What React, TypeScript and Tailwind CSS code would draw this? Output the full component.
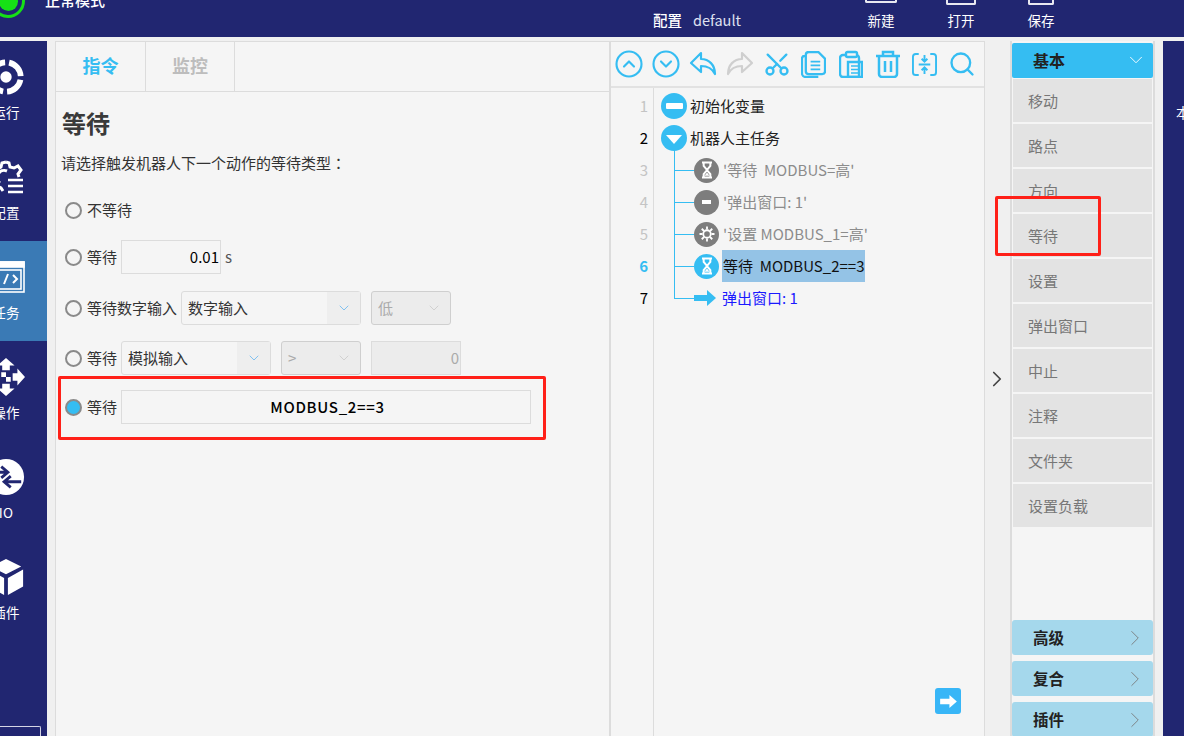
import { ChevronDown, ChevronRight, CircleChevronDown, CircleChevronUp, Scissors, Search } from 'lucide-react'
import type { ReactNode } from 'react'

const navItems = ['运行', '配置', '任务', '操作', 'IO', '插件']
const basicItems = ['移动', '路点', '方向', '等待', '设置', '弹出窗口', '中止', '注释', '文件夹', '设置负载']

function Hourglass() {
  return (
    <svg viewBox="0 0 24 24" className="w-[20px] h-[20px]" fill="none" stroke="#fff" strokeWidth="2.4">
      <path d="M6 3h12M6 21h12M8 3v4l4 5-4 5v4M16 3v4l-4 5 4 5v4" />
      <path d="M9 19l3-4 3 4z" fill="#fff" stroke="none" />
    </svg>
  )
}

function Gear() {
  return (
    <svg viewBox="0 0 24 24" className="w-[18px] h-[18px]" fill="none" stroke="#fff" strokeWidth="2.4">
      <circle cx="12" cy="12" r="5" />
      <path d="M12 2v4M12 18v4M2 12h4M18 12h4M5 5l3 3M16 16l3 3M19 5l-3 3M8 16l-3 3" />
    </svg>
  )
}

function NavIcon({ name }: { name: string }) {
  if (name === '运行') {
    return (
      <svg viewBox="0 0 40 40" className="w-[38px] h-[38px]" fill="none" stroke="#fff">
        <circle cx="20" cy="20" r="15.5" strokeWidth="6" strokeDasharray="20 4.3" strokeDashoffset="-3" />
        <circle cx="20" cy="20" r="6" fill="#fff" stroke="none" />
      </svg>
    )
  }
  if (name === '配置') {
    return (
      <svg viewBox="0 0 40 40" className="w-[40px] h-[40px]" fill="none" stroke="#fff" strokeWidth="3">
        <path d="M20 5l3 1 1 4 4 1 4-2 3 4-3 4 1 3M20 5l-4 1-1 4-4 2-4-2-3 5 3 3v5l-3 3 3 5 4-2 4 2 2 3M14 26a7 7 0 0 1 7-12" />
        <path d="M22 23h15M22 29h15M22 35h15" strokeWidth="2.6" />
      </svg>
    )
  }
  if (name === '任务') {
    return (
      <svg viewBox="0 0 40 34" className="w-[40px] h-[34px]" fill="none" stroke="#fff" strokeWidth="1.6">
        <rect x="1" y="2" width="37" height="30" />
        <rect x="1" y="2" width="37" height="5" fill="#fff" />
        <rect x="5" y="10" width="30" height="19" />
        <path d="M13 15l-4 4 4 4M27 15l4 4-4 4M22 14l-4 10" strokeWidth="2" />
      </svg>
    )
  }
  if (name === '操作') {
    return (
      <svg viewBox="0 0 40 40" className="w-[38px] h-[38px]" fill="#fff">
        <path d="M20 0l9 8h-5v5h-8V8h-5zM20 40l-9-8h5v-5h8v5h5zM40 20l-8 9v-5h-5v-8h5v-5zM0 20l8-9v5h5v8H8v5z" />
        <rect x="15" y="15" width="5" height="5" />
        <rect x="20" y="20" width="5" height="5" />
      </svg>
    )
  }
  if (name === 'IO') {
    return (
      <svg viewBox="0 0 40 40" className="w-[38px] h-[38px]">
        <circle cx="20" cy="20" r="19" fill="#fff" />
        <path d="M4 15h16M15 9l7 6-7 6M36 25H20M25 19l-7 6 7 6" fill="none" stroke="#212671" strokeWidth="3" />
      </svg>
    )
  }
  return (
    <svg viewBox="0 0 40 40" className="w-[38px] h-[38px]" fill="#fff">
      <path d="M20 1l16 8-16 8L4 9zM2 12l16 9v18L2 30zM38 12l-16 9v18l16-9z" />
    </svg>
  )
}

function Radio({ checked }: { checked?: boolean }) {
  return <span className={`w-[17px] h-[17px] rounded-full border-2 border-[#8a8a8a] shrink-0 ${checked ? 'bg-[#35bdf2]' : 'bg-[#f5f5f5]'}`} />
}

function Select({ label, width, disabled }: { label: string; width: string; disabled?: boolean }) {
  return (
    <div className={`${width} h-[34px] flex items-center rounded-[3px] border shrink-0 ${disabled ? 'border-[#cfcfcf] bg-[#ececec] text-[#aaa]' : 'border-[#dcdcdc] bg-[#f5f5f5] text-[#333]'}`}>
      <span className="flex-1 pl-[6px] text-[15px]">{label}</span>
      <span className={`w-[33px] h-full flex items-center justify-center ${disabled ? '' : 'bg-[#eeeeee]'}`}>
        <ChevronDown className={`w-[16px] h-[16px] ${disabled ? 'text-[#ccc]' : 'text-[#6fb9f0]'}`} strokeWidth={1.3} />
      </span>
    </div>
  )
}

function TreeRow({ no, noClass, children }: { no: number; noClass: string; children: ReactNode }) {
  return (
    <div className="h-[32px] flex items-center">
      <span className={`w-[37px] text-right text-[15px] shrink-0 ${noClass}`}>{no}</span>
      {children}
    </div>
  )
}

function ChildRow({ no, noClass, icon, iconBg, children }: { no: number; noClass: string; icon: ReactNode; iconBg: string; children: ReactNode }) {
  return (
    <TreeRow no={no} noClass={noClass}>
      <span className="w-[20px] h-px bg-[#35bdf2] ml-[26px] shrink-0" />
      <span className={`w-[25px] h-[25px] rounded-full flex items-center justify-center shrink-0 ${iconBg}`}>{icon}</span>
      {children}
    </TreeRow>
  )
}

export default function App() {
  return (
    <div className="w-[1184px] h-[736px] overflow-hidden flex flex-col bg-[#f0f0f0] font-['Noto_Sans_CJK_SC','Noto_Sans',sans-serif] relative">
      {/* top bar */}
      <div className="h-[37px] bg-[#212671] text-white flex shrink-0 overflow-hidden">
        <div className="w-[34px] h-[34px] -mt-[16px] -ml-[9px] rounded-full border-[3px] border-[#16e016] flex items-center justify-center shrink-0">
          <span className="w-[19px] h-[19px] rounded-full bg-[#16e016]" />
        </div>
        <span className="ml-[20px] -mt-[11px] text-[15px] font-medium leading-[22px] w-[608px] shrink-0">正常模式</span>
        <div className="flex items-center gap-[11px] text-[14.5px] pt-[3px] w-[174px] shrink-0">
          <span className="font-medium">配置</span>
          <span className="text-[#dfe0f0]">default</span>
        </div>
        <div className="flex text-[13.5px] ml-[14px]">
          {['新建', '打开', '保存'].map((t, i) => (
            <div key={t} className="w-[80px] flex flex-col items-center">
              <span className={`border-x-2 border-b-2 border-[#e8e8f0] rounded-b-[2px] ${i === 0 ? 'w-[32px] h-[3px]' : i === 1 ? 'w-[30px] h-[5px]' : 'w-[26px] h-[5px]'}`} />
              <span className={`leading-[20px] ${i === 0 ? 'mt-[7px]' : 'mt-[5px]'}`}>{t}</span>
            </div>
          ))}
        </div>
      </div>

      <div className="flex-1 flex mt-[4px] min-h-0">
        {/* left nav, cut off at the window edge */}
        <div className="w-[47px] bg-[#212671] shrink-0 overflow-hidden flex flex-col relative">
          {navItems.map(n => (
            <div key={n} className={`h-[100px] w-[80px] -ml-[34px] flex flex-col items-center text-white shrink-0 ${n === '任务' ? 'bg-[#3a7ab5] w-[114px]! pr-[34px]' : ''}`}>
              <div className="h-[72px] flex items-center justify-center"><NavIcon name={n} /></div>
              <span className="text-[13.5px] leading-[18px] -mt-[10px] tracking-wide">{n}</span>
            </div>
          ))}
          <span className="absolute left-[-8px] bottom-0 w-[49px] h-[10px] border-t border-r border-[#d5d5e5] rounded-tr-[2px]" />
        </div>

        {/* instruction panel */}
        <div className="w-[555px] ml-[8px] bg-[#f5f5f5] border-x border-t border-[#dcdcdc] shrink-0 flex flex-col">
          <div className="h-[50px] flex border-b border-[#dcdcdc] shrink-0 text-[18px] font-bold">
            <div className="w-[90px] pb-[2px] border-r border-[#dcdcdc] flex items-center justify-center text-[#35bdf2]">指令</div>
            <div className="w-[89px] pb-[2px] border-r border-[#dcdcdc] flex items-center justify-center text-[#bdbdbd]">监控</div>
          </div>
          <div className="pl-[6px] text-[#333]">
            <h1 className="text-[24px] font-bold leading-[32px] mt-[15px] text-[#3a3a3a]">等待</h1>
            <p className="text-[15px] leading-[22px] mt-[13px] -ml-px">请选择触发机器人下一个动作的等待类型<span className="font-['Noto_Sans_CJK_TC']">：</span></p>
            <div className="pl-[3px] text-[15px]">
              <div className="h-[34px] mt-[19px] flex items-center gap-[5px]"><Radio /><span>不等待</span></div>
              <div className="h-[34px] mt-[13px] flex items-center gap-[5px]">
                <Radio />
                <span className="w-[30px]">等待</span>
                <div className="ml-[-1px] w-[100px] h-full border border-[#dcdcdc] flex items-center justify-end pr-[1px] text-black">0.01</div>
                <span className="-ml-[1px] text-[#555]">s</span>
              </div>
              <div className="h-[34px] mt-[17px] flex items-center gap-[5px]">
                <Radio />
                <span className="w-[90px] shrink-0">等待数字输入</span>
                <div className="-ml-[1px]"><Select label="数字输入" width="w-[180px]" /></div>
                <div className="ml-[5px]"><Select label="低" width="w-[80px]" disabled /></div>
              </div>
              <div className="h-[34px] mt-[16px] flex items-center gap-[5px]">
                <Radio />
                <span className="w-[30px]">等待</span>
                <div className="-ml-[1px]"><Select label="模拟输入" width="w-[150px]" /></div>
                <div className="ml-[5px]"><Select label=">" width="w-[80px]" disabled /></div>
                <div className="ml-[5px] w-[90px] h-full bg-[#ececec] border border-[#dcdcdc] flex items-center justify-end pr-[1px] text-[#aaa]">0</div>
              </div>
              <div className="h-[34px] mt-[15px] flex items-center gap-[5px]">
                <Radio checked />
                <span className="w-[30px]">等待</span>
                <div className="-ml-[1px] w-[410px] h-full pl-[3px] border border-[#dcdcdc] flex items-center justify-center font-medium text-black tracking-[0.7px]">MODBUS_2==3</div>
              </div>
            </div>
          </div>
        </div>

        {/* program tree */}
        <div className="w-[375px] bg-[#f5f5f5] border-x border-t border-[#dcdcdc] shrink-0 flex flex-col">
          <div className="h-[46px] flex items-center border-b-2 border-[#e2e2e2] shrink-0 text-[#35bdf2]">
            <span className="w-[37px] -ml-px flex justify-center"><CircleChevronUp className="w-[30px] h-[30px]" strokeWidth={1.7} /></span>
            <span className="w-[37px] flex justify-center"><CircleChevronDown className="w-[30px] h-[30px]" strokeWidth={1.7} /></span>
            <span className="w-[37px] flex justify-center">
              <svg viewBox="0 0 28 26" className="w-[28px] h-[26px]" fill="none" stroke="currentColor" strokeWidth="2.2" strokeLinejoin="round">
                <path d="M12 2L2 12l10 9v-6c6 0 11 2 14 8 0-9-6-15-14-15z" />
              </svg>
            </span>
            <span className="w-[37px] flex justify-center">
              <svg viewBox="0 0 28 26" className="w-[28px] h-[26px] -scale-x-100 text-[#cfcfcf]" fill="none" stroke="currentColor" strokeWidth="2.2" strokeLinejoin="round">
                <path d="M12 2L2 12l10 9v-6c6 0 11 2 14 8 0-9-6-15-14-15z" />
              </svg>
            </span>
            <span className="w-[37px] flex justify-center"><Scissors className="w-[28px] h-[28px] -rotate-90" strokeWidth={2} /></span>
            <span className="w-[37px] flex justify-center">
              <svg viewBox="0 0 26 28" className="w-[25px] h-[27px]" fill="none" stroke="currentColor" strokeWidth="2.4">
                <path d="M8 1h10l7 7v13a3 3 0 0 1-3 3H8a3 3 0 0 1-3-3V4a3 3 0 0 1 3-3zM5 5H4a3 3 0 0 0-3 3v15a4 4 0 0 0 4 4h13" />
                <path d="M10 11h10M10 15h10M10 19h10" strokeWidth="1.8" />
              </svg>
            </span>
            <span className="w-[37px] flex justify-center">
              <svg viewBox="0 0 24 28" className="w-[24px] h-[28px]" fill="none" stroke="currentColor" strokeWidth="2.4">
                <path d="M7 5H4a3 3 0 0 0-3 3v16a3 3 0 0 0 3 3h16V8a3 3 0 0 0-3-3h-0" />
                <rect x="7" y="2" width="11" height="5" rx="1.5" />
                <path d="M9 12h14v15H9z" />
                <path d="M12 16h8M12 19.500h8M12 23h8" strokeWidth="1.7" />
              </svg>
            </span>
            <span className="w-[37px] flex justify-center">
              <svg viewBox="0 0 26 28" className="w-[26px] h-[28px]" fill="none" stroke="currentColor" strokeWidth="2.5">
                <path d="M1 6h24M8 6V2h10v4M4 6v18a3 3 0 0 0 3 3h12a3 3 0 0 0 3-3V6M10 11v11M16 11v11" />
              </svg>
            </span>
            <span className="w-[37px] flex justify-center">
              <svg viewBox="0 0 26 26" className="w-[25px] h-[25px]" fill="none" stroke="currentColor" strokeWidth="2">
                <path d="M7 2H4a3 3 0 0 0-3 3v16a3 3 0 0 0 3 3h3M19 2h3a3 3 0 0 1 3 3v16a3 3 0 0 1-3 3h-3M7 13h12M13 3v6M10 7l3 3 3-3M13 23v-6M10 19l3-3 3 3" />
              </svg>
            </span>
            <span className="w-[37px] flex justify-center"><Search className="w-[28px] h-[28px]" strokeWidth={2} /></span>
          </div>
          <div className="flex-1 relative flex flex-col min-h-0 pt-[2px]">
            <span className="absolute left-[42px] top-0 bottom-0 w-px bg-[#dcdcdc]" />
            <span className="absolute left-[63px] top-[62px] w-px h-[148px] bg-[#35bdf2]" />
            <div className="text-[15px] text-[#222]">
              <TreeRow no={1} noClass="text-[#c4c4c4]">
                <span className="w-[26px] h-[26px] ml-[13px] rounded-full bg-[#35bdf2] flex items-center justify-center shrink-0"><span className="w-[17px] h-[6px] rounded-[1px] bg-white" /></span>
                <span className="ml-[3px]">初始化变量</span>
              </TreeRow>
              <TreeRow no={2} noClass="text-black">
                <span className="w-[26px] h-[26px] ml-[13px] rounded-full bg-[#35bdf2] flex items-center justify-center shrink-0"><span className="w-0 h-0 mt-[3px] border-x-[8px] border-x-transparent border-t-[9px] border-t-white" /></span>
                <span className="ml-[3px]">机器人主任务</span>
              </TreeRow>
              <div className="text-[#8c8c8c]">
                <ChildRow no={3} noClass="text-[#c4c4c4]" icon={<Hourglass />} iconBg="bg-[#7d7d7d]"><span className="ml-[4px] whitespace-pre">'等待  MODBUS=高'</span></ChildRow>
                <ChildRow no={4} noClass="text-[#c4c4c4]" icon={<span className="w-[9px] h-[4px] bg-white" />} iconBg="bg-[#7d7d7d]"><span className="ml-[4px]">'弹出窗口: 1'</span></ChildRow>
                <ChildRow no={5} noClass="text-[#c4c4c4]" icon={<Gear />} iconBg="bg-[#7d7d7d]"><span className="ml-[4px]">'设置 MODBUS_1=高'</span></ChildRow>
                <ChildRow no={6} noClass="text-[#35bdf2] font-semibold" icon={<Hourglass />} iconBg="bg-[#35bdf2]"><span className="ml-[3px] h-[32px] px-[1px] flex items-center whitespace-pre bg-[#94c3e6] text-[#111]">等待  MODBUS_2==3</span></ChildRow>
                <TreeRow no={7} noClass="text-black">
                  <span className="w-[20px] h-px bg-[#35bdf2] ml-[26px] shrink-0" />
                  <svg viewBox="0 0 23 16" className="w-[23px] h-[16px] shrink-0 -ml-px"><path d="M1 5h13V0l9 8-9 8v-5H1z" fill="#35bdf2" /></svg>
                  <span className="ml-[6px] text-[#1a1aff]">弹出窗口: 1</span>
                </TreeRow>
              </div>
            </div>
            <div className="mt-auto self-end mr-[23px] mb-[22px] w-[26px] h-[26px] rounded-[3px] bg-[#38b6f7] flex items-center justify-center">
              <svg viewBox="0 0 18 14" className="w-[17px] h-[13px]"><path d="M0 4h10V0l8 7-8 7v-4H0z" fill="#fff" /></svg>
            </div>
          </div>
        </div>

        {/* collapse handle */}
        <div className="w-[25px] shrink-0 flex items-center justify-center">
          <ChevronRight className="w-[26px] h-[26px] text-[#444] -mt-[20px] -ml-[1px]" strokeWidth={1.6} />
        </div>

        {/* instruction list */}
        <div className="w-[145px] bg-[#f5f5f5] border-x-2 border-[#dcdcdc] shrink-0 flex flex-col pt-[2px] min-h-0">
          <div className="h-[35px] pb-[2px] bg-[#35bdf2] rounded-[2px] flex items-center justify-between pl-[21px] pr-[6px] font-bold text-[16px] text-[#222] shrink-0">
            基本
            <ChevronDown className="w-[22px] h-[22px] text-white" strokeWidth={1} />
          </div>
          <div className="flex flex-col gap-[2px] px-px mt-px">
            {basicItems.map(t => (
              <div key={t} className="h-[43px] pt-[2px] bg-[#e3e3e3] flex items-center pl-[15px] text-[15px] text-[#777]">{t}</div>
            ))}
          </div>
          <div className="mt-auto flex flex-col gap-[6px] -mb-[1px]">
            {['高级', '复合', '插件'].map(t => (
              <div key={t} className="h-[35px] bg-[#a5d8ec] rounded-[3px] flex items-center justify-between pl-[21px] pr-[5px] font-bold text-[15.5px] text-[#222]">
                {t}
                <ChevronRight className="w-[26px] h-[26px] text-[#777]" strokeWidth={0.8} />
              </div>
            ))}
          </div>
        </div>

        <div className="w-[21px] ml-[8px] bg-[#212671] shrink-0 overflow-hidden text-white text-[14px] pt-[61px] pl-[13px] whitespace-nowrap">本</div>
      </div>

      {/* red annotation boxes */}
      <div className="absolute left-[58px] top-[376px] w-[488px] h-[64px] border-[3px] border-[#ff2018] rounded-[2px]" />
      <div className="absolute left-[995px] top-[196px] w-[106px] h-[60px] border-[3px] border-[#ff2018] rounded-[2px]" />
    </div>
  )
}
